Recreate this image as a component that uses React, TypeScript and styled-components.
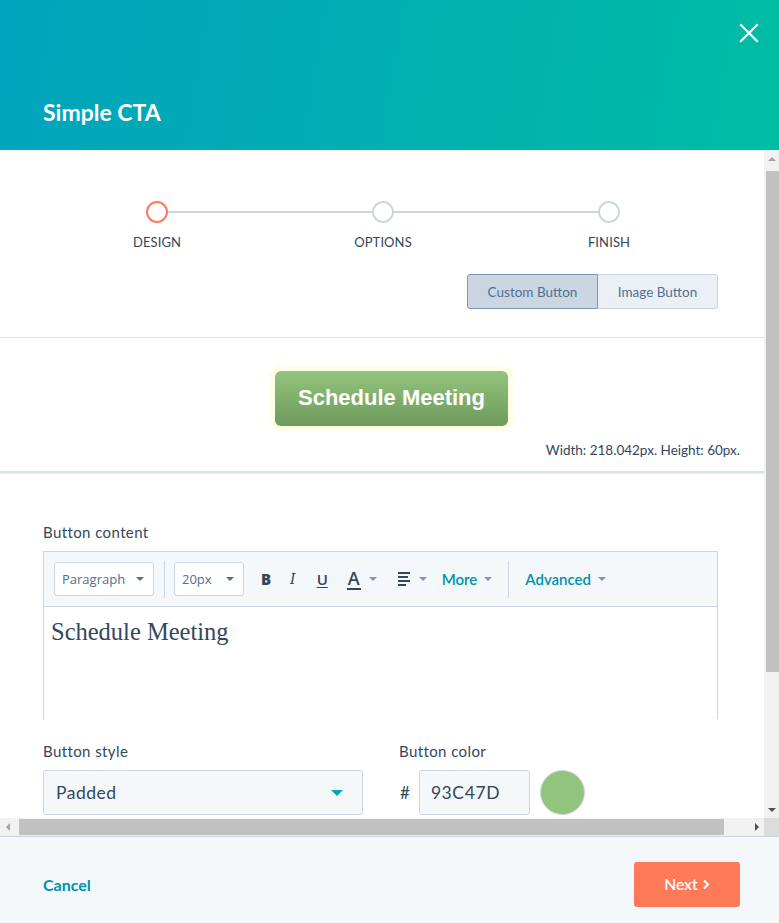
import React from "react";
import styled, { createGlobalStyle } from "styled-components";

const Global = createGlobalStyle`
  html, body { margin: 0; padding: 0; }
  body { font-family: Lato, "Open Sans", "Liberation Sans", sans-serif; color: #33475b; background: #fff; }
  * { box-sizing: border-box; }
`;

const Modal = styled.div`
  width: 779px;
  height: 923px;
  display: flex;
  flex-direction: column;
  overflow: hidden;
`;

const Header = styled.header`
  height: 150px;
  flex: none;
  background: linear-gradient(100deg, #00a4bd 0%, #00b0b0 55%, #00bda5 100%);
  display: flex;
  align-items: flex-end;
  justify-content: space-between;
  padding: 0 0 24px 43px;
  position: relative;
`;

const Title = styled.h1`
  margin: 0;
  font-family: Lato, "Open Sans", sans-serif;
  font-size: 23px;
  font-weight: 700;
  color: #fff;
  line-height: 28px;
`;

const Close = styled.button`
  position: absolute;
  top: 23px;
  right: 20px;
  width: 20px;
  height: 20px;
  padding: 0;
  border: 0;
  background: none;
  display: flex;
`;

const ScrollFrame = styled.div`
  flex: none;
  height: 686px;
  display: grid;
  grid-template-columns: 764px 15px;
  grid-template-rows: 668px 18px;
`;

const Viewport = styled.div`
  overflow: hidden;
  background: #fff;
`;

const Inner = styled.div`
  width: 795px;
`;

const VBar = styled.div`
  background: #f1f1f1;
  display: flex;
  flex-direction: column;
  align-items: stretch;
`;

const HBar = styled.div`
  background: #f1f1f1;
  display: flex;
  align-items: stretch;
`;

const Corner = styled.div`
  background: #dcdcdc;
`;

const ArrowBtn = styled.div<{ $dir: "up" | "down" | "left" | "right"; $dim?: boolean }>`
  flex: none;
  width: 15px;
  height: ${(p) => (p.$dir === "left" || p.$dir === "right" ? "18px" : "17px")};
  display: flex;
  align-items: center;
  justify-content: center;
  &::after {
    content: "";
    width: 0;
    height: 0;
    ${(p) => {
      const c = p.$dim ? "#a3a3a3" : "#505050";
      switch (p.$dir) {
        case "up":
          return `border-left:4px solid transparent;border-right:4px solid transparent;border-bottom:4px solid ${c};`;
        case "down":
          return `border-left:4px solid transparent;border-right:4px solid transparent;border-top:4px solid ${c};`;
        case "left":
          return `border-top:4px solid transparent;border-bottom:4px solid transparent;border-right:4px solid ${c};`;
        default:
          return `border-top:4px solid transparent;border-bottom:4px solid transparent;border-left:4px solid ${c};`;
      }
    }}
  }
`;

const VThumb = styled.div`
  height: 501px;
  margin: 4px 0 0 2px;
  width: 13px;
  background: #c1c1c1;
`;

const HThumb = styled.div`
  width: 705px;
  margin: 1px 0 1px 4px;
  background: #c1c1c1;
`;

const Spacer = styled.div`
  flex: 1;
`;

const StepSection = styled.section`
  width: 764px;
  padding: 51px 46px 28px 44px;
  border-bottom: 1px solid #dfe3eb;
`;

const Steps = styled.ol`
  list-style: none;
  margin: 0;
  padding: 0;
  display: grid;
  grid-template-columns: repeat(3, 226px);
`;

const Step = styled.li<{ $last?: boolean }>`
  position: relative;
  display: flex;
  flex-direction: column;
  align-items: center;
  gap: 11px;
  &::before {
    content: "";
    display: ${(p) => (p.$last ? "none" : "block")};
    position: absolute;
    top: 10px;
    left: 50%;
    width: 100%;
    height: 2px;
    background: #cbd6e2;
  }
`;

const Dot = styled.span<{ $active?: boolean }>`
  position: relative;
  z-index: 1;
  width: 22px;
  height: 22px;
  border-radius: 50%;
  background: #fff;
  border: 2px solid ${(p) => (p.$active ? "#ff7a59" : "#cbd6e2")};
`;

const StepLabel = styled.span`
  font-size: 13px;
  line-height: 16px;
  color: #33475b;
  text-transform: uppercase;
  letter-spacing: 0.1px;
`;

const ToggleRow = styled.div`
  display: flex;
  justify-content: flex-end;
  margin-top: 24px;
`;

const Toggle = styled.button<{ $on?: boolean }>`
  height: 35px;
  padding: 0;
  width: ${(p) => (p.$on ? "131px" : "120px")};
  font-family: Lato, "Open Sans", sans-serif;
  font-size: 13.5px;
  color: #516f90;
  background: ${(p) => (p.$on ? "#cbd6e2" : "#eaf0f6")};
  border: 1px solid ${(p) => (p.$on ? "#7c98b6" : "#cbd6e2")};
  border-radius: ${(p) => (p.$on ? "3px 0 0 3px" : "0 3px 3px 0")};
  ${(p) => (p.$on ? "" : "border-left: 0;")}
`;

const PreviewSection = styled.section`
  width: 764px;
  padding: 28px 24px 12px 0;
  border-bottom: 2px solid #d9e2ec;
  box-shadow: 0 1px 2px rgba(203, 214, 226, 0.5);
  display: flex;
  flex-direction: column;
`;

const PreviewStage = styled.div`
  display: flex;
  justify-content: center;
  padding-left: 43px;
`;

const Glow = styled.div`
  padding: 5px;
  border-radius: 10px;
  background: #fffde8;
`;

const CtaButton = styled.a`
  display: flex;
  align-items: center;
  justify-content: center;
  width: 233px;
  height: 55px;
  border-radius: 6px;
  background: linear-gradient(to bottom, #93c47d 0%, #6e9a5c 100%);
  color: #fff;
  font-family: "Liberation Sans", Arial, sans-serif;
  font-weight: 700;
  font-size: 22px;
  text-decoration: none;
  padding-bottom: 2px;
`;

const SizeNote = styled.div`
  align-self: flex-end;
  margin-top: 11px;
  font-family: Lato, "Open Sans", sans-serif;
  font-size: 13.5px;
  line-height: 17px;
  color: #33475b;
`;

const FormSection = styled.section`
  width: 764px;
  padding: 50px 46px 30px 43px;
`;

const FieldLabel = styled.label`
  display: block;
  font-size: 15px;
  line-height: 18px;
  letter-spacing: 0.4px;
  color: #33475b;
  margin-bottom: 10px;
`;

const Editor = styled.div`
  border: 1px solid #cbd6e2;
  border-bottom: 0;
`;

const Toolbar = styled.div`
  height: 55px;
  background: #f5f8fa;
  border-bottom: 1px solid #cbd6e2;
  display: flex;
  align-items: center;
  padding-left: 10px;
`;

const ToolSelect = styled.div<{ $w: number }>`
  width: ${(p) => p.$w}px;
  height: 34px;
  background: #fff;
  border: 1px solid #cbd6e2;
  border-radius: 3px;
  display: flex;
  align-items: center;
  justify-content: space-between;
  padding: 0 9px 0 7px;
  font-family: "Open Sans", Lato, sans-serif;
  font-size: 13px;
  color: #516f90;
`;

const Divider = styled.span<{ $ml: number; $mr: number }>`
  width: 1px;
  height: 37px;
  background: #cbd6e2;
  margin: 0 ${(p) => p.$mr}px 0 ${(p) => p.$ml}px;
`;

const Caret = styled.span<{ $color?: string; $size?: number }>`
  display: inline-block;
  width: 0;
  height: 0;
  border-left: ${(p) => p.$size ?? 4}px solid transparent;
  border-right: ${(p) => p.$size ?? 4}px solid transparent;
  border-top: ${(p) => p.$size ?? 4}px solid ${(p) => p.$color ?? "#7c98b6"};
`;

const IconBtn = styled.span<{ $ml: number }>`
  margin-left: ${(p) => p.$ml}px;
  display: inline-flex;
  align-items: center;
  gap: 8px;
  color: #33475b;
`;

const FmtLetter = styled.span<{ $italic?: boolean; $underline?: boolean }>`
  font-family: ${(p) => (p.$italic ? '"DejaVu Serif", serif' : '"Open Sans", Lato, sans-serif')};
  font-size: ${(p) => (p.$italic ? "14px" : "15px")};
  font-weight: ${(p) => (p.$italic ? 400 : p.$underline ? 600 : 800)};
  font-style: ${(p) => (p.$italic ? "italic" : "normal")};
  text-decoration: ${(p) => (p.$underline ? "underline" : "none")};
  text-underline-offset: 2px;
  color: #33475b;
`;

const ColorA = styled.span`
  font-family: "Open Sans", Lato, sans-serif;
  font-size: 18px;
  font-weight: 600;
  line-height: 18px;
  color: #33475b;
  border-bottom: 2px solid #33475b;
  padding: 0 1px 1px;
`;

const MenuLink = styled.span<{ $ml: number }>`
  margin-left: ${(p) => p.$ml}px;
  display: inline-flex;
  align-items: center;
  gap: 7px;
  font-family: Lato, "Open Sans", sans-serif;
  font-size: 15px;
  font-weight: 600;
  color: #0091ae;
`;

const EditorBody = styled.div`
  height: 112px;
  padding: 10px 7px;
  line-height: 30px;
  color: #33475b;
`;

const SerifText = styled.span`
  font-family: "Liberation Serif", Georgia, serif;
  font-size: 24.5px;
`;

const FieldRow = styled.div`
  display: flex;
  gap: 36px;
  margin-top: 23px;
`;

const Field = styled.div`
  display: flex;
  flex-direction: column;
`;

const StyleSelect = styled.div`
  width: 320px;
  height: 45px;
  background: #f5f8fa;
  border: 1px solid #cbd6e2;
  border-radius: 3px;
  display: flex;
  align-items: center;
  justify-content: space-between;
  padding: 0 19px 0 12px;
  font-size: 17.5px;
  letter-spacing: 0.5px;
  color: #33475b;
`;

const ColorRow = styled.div`
  display: flex;
  align-items: center;
`;

const Hash = styled.span`
  font-size: 17px;
  color: #33475b;
  margin: 0 9px 0 1px;
`;

const HexInput = styled.div`
  width: 111px;
  height: 45px;
  background: #f5f8fa;
  border: 1px solid #cbd6e2;
  border-radius: 3px;
  display: flex;
  align-items: center;
  padding-left: 11px;
  font-size: 17.5px;
  letter-spacing: 0.6px;
  color: #33475b;
`;

const Swatch = styled.span<{ $c: string }>`
  margin-left: 10px;
  width: 45px;
  height: 45px;
  border-radius: 50%;
  background: ${(p) => p.$c};
  border: 1px solid #cbd6e2;
`;

const Footer = styled.footer`
  flex: 1;
  background: #f5f8fa;
  border-top: 1px solid #cbd6e2;
  display: flex;
  align-items: center;
  justify-content: space-between;
  padding: 8px 39px 0 43px;
`;

const CancelLink = styled.a`
  font-size: 16px;
  font-weight: 700;
  color: #0091ae;
  text-decoration: none;
`;

const NextButton = styled.button`
  width: 106px;
  height: 45px;
  border: 0;
  border-radius: 3px;
  background: #ff7a59;
  color: #fff;
  font-family: Lato, "Open Sans", sans-serif;
  font-size: 15.5px;
  font-weight: 600;
  display: flex;
  align-items: center;
  justify-content: center;
  gap: 4px;
`;

const AlignIcon = () => (
  <svg width="13" height="14" viewBox="0 0 13 14">
    <g stroke="#33475b" strokeWidth="2">
      <line x1="0" y1="1" x2="12" y2="1" />
      <line x1="0" y1="5" x2="10" y2="5" />
      <line x1="0" y1="9" x2="12" y2="9" />
      <line x1="0" y1="13" x2="8" y2="13" />
    </g>
  </svg>
);

export default function App() {
  return (
    <>
      <Global />
      <Modal>
        <Header>
          <Title>Simple CTA</Title>
          <Close aria-label="Close">
            <svg width="20" height="20" viewBox="0 0 20 20">
              <path d="M2 2 L18 18 M18 2 L2 18" stroke="#fff" strokeWidth="2.2" strokeLinecap="square" />
            </svg>
          </Close>
        </Header>
        <ScrollFrame>
          <Viewport>
            <Inner>
              <StepSection>
                <Steps>
                  <Step>
                    <Dot $active />
                    <StepLabel>Design</StepLabel>
                  </Step>
                  <Step>
                    <Dot />
                    <StepLabel>Options</StepLabel>
                  </Step>
                  <Step $last>
                    <Dot />
                    <StepLabel>Finish</StepLabel>
                  </Step>
                </Steps>
                <ToggleRow>
                  <Toggle $on>Custom Button</Toggle>
                  <Toggle>Image Button</Toggle>
                </ToggleRow>
              </StepSection>
              <PreviewSection>
                <PreviewStage>
                  <Glow>
                    <CtaButton>Schedule Meeting</CtaButton>
                  </Glow>
                </PreviewStage>
                <SizeNote>Width: 218.042px. Height: 60px.</SizeNote>
              </PreviewSection>
              <FormSection>
                <FieldLabel>Button content</FieldLabel>
                <Editor>
                  <Toolbar>
                    <ToolSelect $w={100}>
                      Paragraph <Caret $color="#516f90" />
                    </ToolSelect>
                    <Divider $ml={10} $mr={9} />
                    <ToolSelect $w={70}>
                      20px <Caret $color="#516f90" />
                    </ToolSelect>
                    <IconBtn $ml={17}>
                      <FmtLetter>B</FmtLetter>
                    </IconBtn>
                    <IconBtn $ml={19}>
                      <FmtLetter $italic>I</FmtLetter>
                    </IconBtn>
                    <IconBtn $ml={21}>
                      <FmtLetter $underline>U</FmtLetter>
                    </IconBtn>
                    <IconBtn $ml={19}>
                      <ColorA>A</ColorA>
                      <Caret />
                    </IconBtn>
                    <IconBtn $ml={21}>
                      <AlignIcon />
                      <Caret />
                    </IconBtn>
                    <MenuLink $ml={15}>
                      More <Caret />
                    </MenuLink>
                    <Divider $ml={16} $mr={0} />
                    <MenuLink $ml={16}>
                      Advanced <Caret />
                    </MenuLink>
                  </Toolbar>
                  <EditorBody>
                    <SerifText>Schedule Meeting</SerifText>
                  </EditorBody>
                </Editor>
                <FieldRow>
                  <Field>
                    <FieldLabel>Button style</FieldLabel>
                    <StyleSelect>
                      Padded <Caret $color="#00a4bd" $size={6} />
                    </StyleSelect>
                  </Field>
                  <Field>
                    <FieldLabel>Button color</FieldLabel>
                    <ColorRow>
                      <Hash>#</Hash>
                      <HexInput>93C47D</HexInput>
                      <Swatch $c="#93c47d" />
                    </ColorRow>
                  </Field>
                </FieldRow>
              </FormSection>
            </Inner>
          </Viewport>
          <VBar>
            <ArrowBtn $dir="up" $dim />
            <VThumb />
            <Spacer />
            <ArrowBtn $dir="down" />
          </VBar>
          <HBar>
            <ArrowBtn $dir="left" $dim />
            <HThumb />
            <Spacer />
            <ArrowBtn $dir="right" />
          </HBar>
          <Corner />
        </ScrollFrame>
        <Footer>
          <CancelLink href="#">Cancel</CancelLink>
          <NextButton>
            Next
            <svg width="8" height="11" viewBox="0 0 8 11">
              <path d="M2 1.5 L6 5.5 L2 9.5" stroke="#fff" strokeWidth="2" fill="none" />
            </svg>
          </NextButton>
        </Footer>
      </Modal>
    </>
  );
}
